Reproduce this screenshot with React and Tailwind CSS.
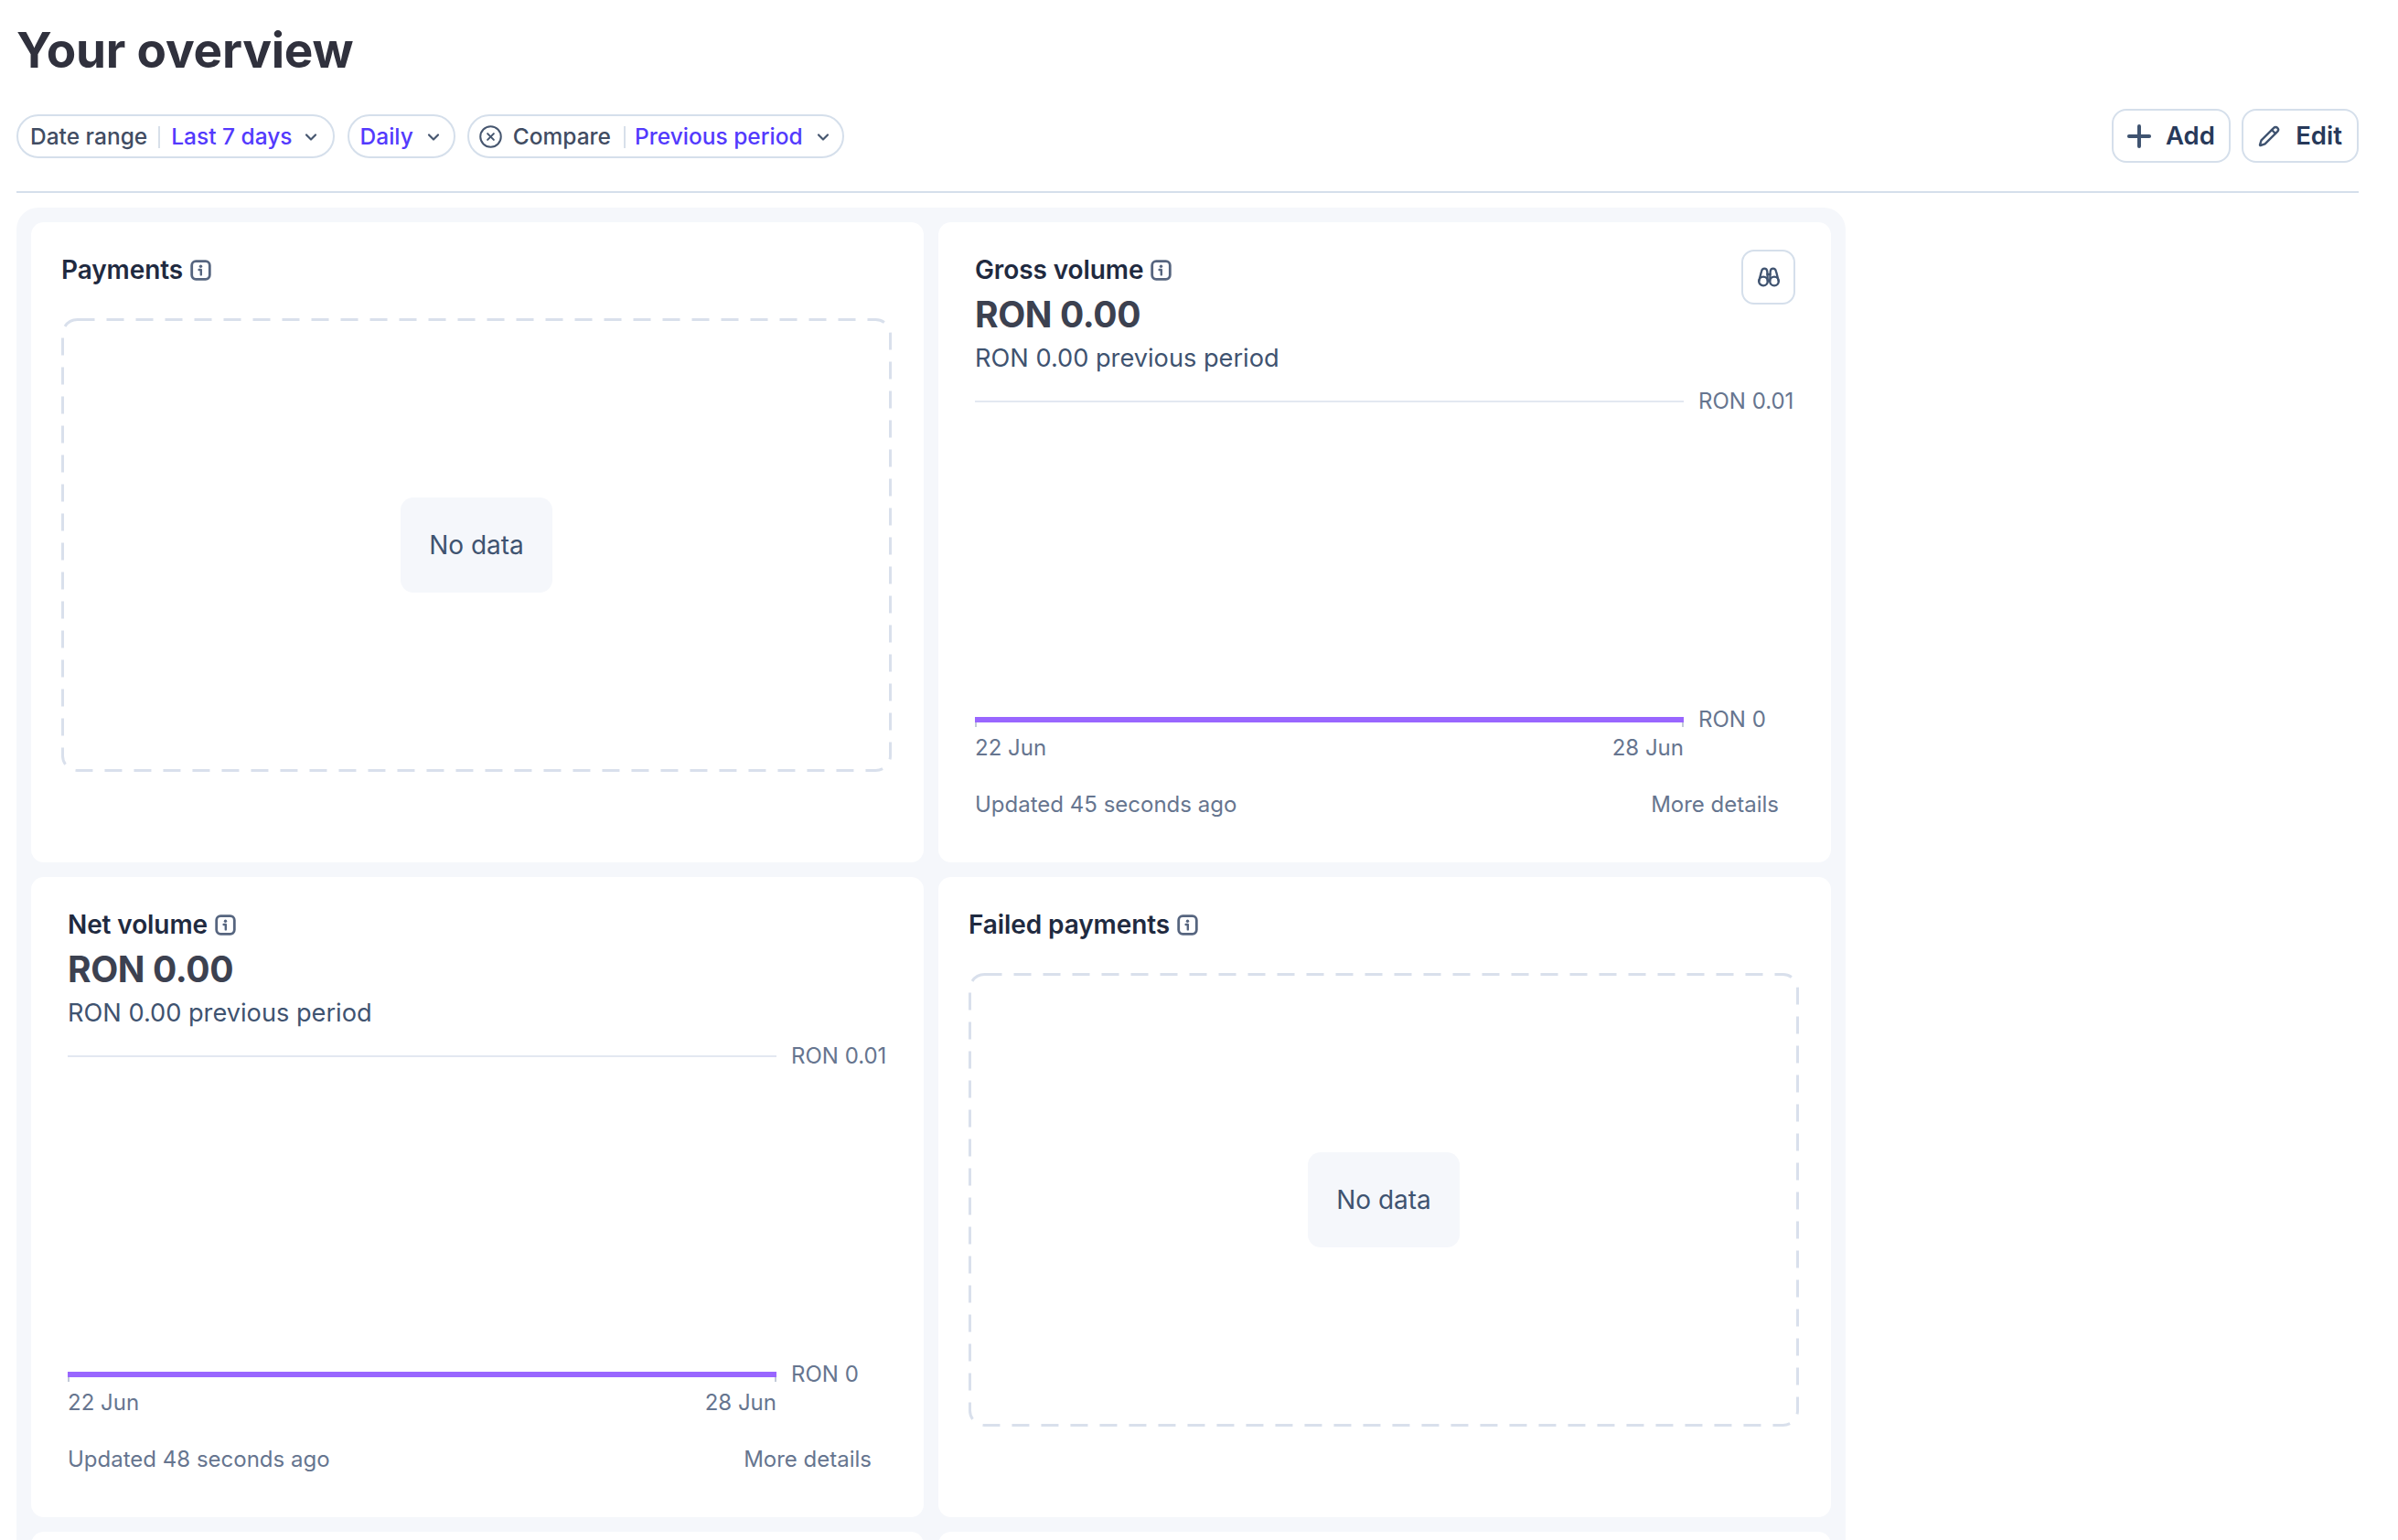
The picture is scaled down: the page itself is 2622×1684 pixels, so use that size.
import React from "react";
import { ChevronDown, CircleX, Pencil, Plus } from "lucide-react";

function InfoIcon() {
  return (
    <svg width="23" height="23" viewBox="0 0 23 23" fill="none" className="shrink-0">
      <rect x="1.7" y="1.7" width="19.6" height="19.6" rx="4.5" stroke="#56657f" strokeWidth="2.8" />
      <circle cx="11.5" cy="7.2" r="1.7" fill="#56657f" />
      <path d="M9.6 11h2.2v5.4" stroke="#56657f" strokeWidth="2.4" strokeLinecap="round" strokeLinejoin="round" />
    </svg>
  );
}

function BinocularsIcon() {
  return (
    <svg width="26" height="22" viewBox="0 0 26 22" fill="none" stroke="#3f5370" strokeWidth="2.3" strokeLinecap="round" strokeLinejoin="round">
      <circle cx="7" cy="15.5" r="4.8" />
      <circle cx="19" cy="15.5" r="4.8" />
      <path d="M2.2 15.5 5 4.8C5.5 2.6 6.6 1.6 8.2 1.6s2.9 1 3.1 3.2l.5 10.7" />
      <path d="M23.8 15.5 21 4.8c-.5-2.2-1.6-3.2-3.2-3.2s-2.9 1-3.1 3.2l-.5 10.7" />
      <path d="M11.5 8h3" />
    </svg>
  );
}

function Chevron() {
  return <ChevronDown size={20} strokeWidth={2.6} className="text-[#46566f] shrink-0" />;
}

function Divider() {
  return <span className="block w-[2px] h-[24px] bg-[#d8e0ea] shrink-0" />;
}

function CardTitle({ label }) {
  return (
    <div className="flex items-center gap-[8px] h-[34px]">
      <span className="text-[28px] leading-[34px] font-semibold text-[#1f2a40] tracking-[-0.1px]">{label}</span>
      <InfoIcon />
    </div>
  );
}

function EmptyCard({ title }) {
  return (
    <section className="bg-white rounded-[14px] h-[700px] pt-[35px] pl-[33px]">
      <CardTitle label={title} />
      <div className="relative mt-[36px] w-[908px] h-[496px] flex items-center justify-center">
        <svg width="908" height="496" fill="none" className="absolute inset-0">
          <rect x="1.5" y="1.5" width="905" height="493" rx="16" stroke="#d9e0ec" strokeWidth="3" strokeDasharray="19 13" />
        </svg>
        <div className="w-[166px] h-[104px] rounded-[14px] bg-[#f5f7fb] flex items-center justify-center text-[28px] text-[#3f5370]">
          No data
        </div>
      </div>
    </section>
  );
}

function VolumeCard({ title, updated, showExplore }) {
  return (
    <section className="bg-white rounded-[14px] h-[700px] pt-[30px] pl-[40px] pr-[39px]">
      <div className="flex justify-between items-start">
        <div className="pt-[5px]">
          <CardTitle label={title} />
          <div className="mt-[8px] text-[39px] leading-[48px] font-bold text-[#3c4150] tracking-[-0.4px]">RON 0.00</div>
          <div className="mt-[4px] text-[27.2px] leading-[40px] text-[#3f5370]">RON 0.00 previous period</div>
        </div>
        {showExplore && (
          <button className="w-[59px] h-[60px] rounded-[14px] border-2 border-[#d5dfeb] flex items-center justify-center">
            <BinocularsIcon />
          </button>
        )}
      </div>

      <div className="mt-[12px] flex items-center h-[30px] text-[24px] text-[#66758f] whitespace-nowrap">
        <div className="w-[775px] h-[2px] bg-[#e3e8f1] shrink-0" />
        <span className="ml-[16px] leading-[30px]">RON 0.01</span>
      </div>
      <div className="h-[318px]" />
      <div className="flex items-center h-[30px] text-[24px] text-[#66758f] whitespace-nowrap">
        <div className="relative w-[775px] h-[6px] bg-[#9966ff] shrink-0">
          <span className="absolute left-0 top-[6px] w-[2px] h-[5px] bg-[#c2cad8]" />
          <span className="absolute right-0 top-[6px] w-[2px] h-[5px] bg-[#c2cad8]" />
        </div>
        <span className="ml-[16px] leading-[30px]">RON 0</span>
      </div>
      <div className="mt-[1px] w-[775px] flex justify-between text-[24px] leading-[30px] text-[#66758f]">
        <span>22 Jun</span>
        <span>28 Jun</span>
      </div>
      <div className="mt-[31px] flex justify-between text-[24px] leading-[32px] text-[#66758f] pr-[18px]">
        <span>{updated}</span>
        <span>More details</span>
      </div>
    </section>
  );
}

export default function App() {
  return (
    <div className="h-screen overflow-hidden bg-white pl-[18px] pr-[43px] pt-[25px] font-['Inter',sans-serif]">
      <h1 className="text-[53px] leading-[60px] font-bold text-[#30313d] tracking-[-0.2px]">Your overview</h1>

      <div className="mt-[34px] flex items-center justify-between h-[59px]">
        <div className="flex items-center text-[24.5px] font-medium">
          <div className="h-[48px] pt-[2px] pl-[13px] pr-[14px] rounded-full border-2 border-[#d5dfeb] flex items-center">
            <span className="text-[#414c62]">Date range</span>
            <span className="mx-[12px]"><Divider /></span>
            <span className="text-[#533afd]">Last 7 days</span>
            <span className="ml-[10px]"><Chevron /></span>
          </div>
          <div className="ml-[14px] h-[48px] pt-[2px] pl-[12px] pr-[12px] rounded-full border-2 border-[#d5dfeb] flex items-center">
            <span className="text-[#533afd]">Daily</span>
            <span className="ml-[12px]"><Chevron /></span>
          </div>
          <div className="ml-[13px] h-[48px] pt-[2px] pl-[10px] pr-[11px] rounded-full border-2 border-[#d5dfeb] flex items-center">
            <CircleX size={27} strokeWidth={1.8} className="text-[#46566f]" />
            <span className="ml-[11px] text-[#414c62]">Compare</span>
            <span className="ml-[14px] mr-[10px]"><Divider /></span>
            <span className="text-[#533afd]">Previous period</span>
            <span className="ml-[12px]"><Chevron /></span>
          </div>
        </div>
        <div className="flex items-center gap-[12px] text-[27.5px] font-semibold text-[#27395a]">
          <button className="w-[130px] h-[59px] pl-[9px] rounded-[16px] border-2 border-[#d5dfeb] flex items-center gap-[10px]">
            <Plus size={38} strokeWidth={2.5} className="text-[#3f5370]" />
            Add
          </button>
          <button className="w-[128px] h-[59px] rounded-[16px] border-2 border-[#d5dfeb] flex items-center justify-center gap-[17px]">
            <Pencil size={24} strokeWidth={2.4} className="text-[#3f5370]" />
            Edit
          </button>
        </div>
      </div>

      <div className="mt-[31px] h-[2px] bg-[#d5dfeb]" />

      <div className="mt-[16px] w-[2000px] rounded-[24px] bg-[#f5f7fb] p-[16px] grid grid-cols-2 gap-[16px]">
        <EmptyCard title="Payments" />
        <VolumeCard title="Gross volume" updated="Updated 45 seconds ago" showExplore />
        <VolumeCard title="Net volume" updated="Updated 48 seconds ago" />
        <EmptyCard title="Failed payments" />
        <section className="bg-white rounded-[14px] h-[700px]" />
        <section className="bg-white rounded-[14px] h-[700px]" />
      </div>
    </div>
  );
}
